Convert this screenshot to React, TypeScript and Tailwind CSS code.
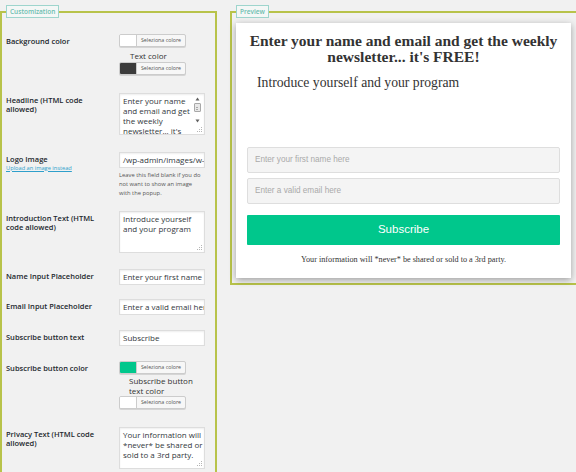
import React from "react";

const labelCls =
  "font-['Open_Sans',sans-serif] text-[7.5px] leading-[9.5px] font-semibold text-[#23282d]";
const fieldText = "font-['Open_Sans',sans-serif] text-[8px] leading-[10px] text-[#32373c]";

function ColorPicker({ swatch }: { swatch: string }) {
  return (
    <div className="flex h-[13px] w-[67px] overflow-hidden rounded-[2px] border border-[#cccccc] bg-[#f7f7f7] shadow-[0_1px_0_#d5d5d5]">
      <div className={`w-[17px] border-r border-[#cccccc] ${swatch}`} />
      <div className="flex flex-1 items-center justify-center font-['Open_Sans',sans-serif] text-[5.3px] text-[#555]">
        Seleziona colore
      </div>
    </div>
  );
}

function Grip() {
  return (
    <svg width="5" height="5" viewBox="0 0 5 5" className="absolute bottom-[2px] right-[2px]">
      <g fill="#b5b5b5">
        <rect x="4" y="0" width="1" height="1" />
        <rect x="2" y="2" width="1" height="1" />
        <rect x="4" y="2" width="1" height="1" />
        <rect x="0" y="4" width="1" height="1" />
        <rect x="2" y="4" width="1" height="1" />
        <rect x="4" y="4" width="1" height="1" />
      </g>
    </svg>
  );
}

function TextArea({ lines, scroll }: { lines: string[]; scroll?: boolean }) {
  return (
    <div className="relative h-[42px] w-[86px] overflow-hidden border border-[#dddddd] bg-white pl-[3px] pt-[2px] shadow-[inset_0_1px_2px_rgba(0,0,0,0.07)]">
      <div className={fieldText}>
        {lines.map((l) => (
          <div key={l} className="whitespace-nowrap">
            {l}
          </div>
        ))}
      </div>
      {scroll && (
        <div className="absolute right-[3px] top-[2px] flex h-[27px] w-[8px] flex-col items-center bg-white">
          <svg width="5" height="4" viewBox="0 0 5 4" className="mt-[1px]">
            <path d="M2.5 0.5 L4.5 3.5 L0.5 3.5 Z" fill="#606060" />
          </svg>
          <div className="mt-[2px] h-[9px] w-[7px] rounded-[1px] border border-[#a8a8a8] bg-[#e8e8e8] px-[1.5px] py-[2.5px]">
            <div className="h-[1px] bg-[#a8a8a8]" />
            <div className="mt-[1px] h-[1px] bg-[#a8a8a8]" />
          </div>
          <svg width="5" height="4" viewBox="0 0 5 4" className="mt-auto">
            <path d="M0.5 0.5 L4.5 0.5 L2.5 3.5 Z" fill="#606060" />
          </svg>
        </div>
      )}
      <Grip />
    </div>
  );
}

function TextInput({ value }: { value: string }) {
  return (
    <div
      className={`h-[16px] w-[86px] overflow-hidden whitespace-nowrap border border-[#dddddd] bg-white pl-[3px] pt-[2px] shadow-[inset_0_1px_2px_rgba(0,0,0,0.07)] ${fieldText}`}
    >
      {value}
    </div>
  );
}

function Row({
  label,
  mt,
  children,
}: {
  label: React.ReactNode;
  mt: string;
  children: React.ReactNode;
}) {
  return (
    <div className={`grid grid-cols-[113px_1fr] ${mt}`}>
      <div className={`${labelCls} mt-[2.5px]`}>{label}</div>
      <div>{children}</div>
    </div>
  );
}

function Legend({ text }: { text: string }) {
  return (
    <legend className="h-[13px] border border-[#9ed5cd] bg-[#f4f7f6] px-[3px] font-['Open_Sans',sans-serif] text-[6.5px] leading-[11px] font-semibold text-[#6cbdb0]">
      {text}
    </legend>
  );
}

export default function App() {
  return (
    <div className="flex h-[472px] w-[576px] overflow-hidden bg-[#f1f1f1] pt-[5px]">
      {/* settings form */}
      <fieldset className="h-[520px] w-[217px] shrink-0 border-2 border-[#b8c34a] pl-[4px]">
        <Legend text="Customization" />

        <Row label="Background color" mt="mt-[16px]">
          <ColorPicker swatch="bg-white" />
          <div className="ml-[11px] mt-[2px] h-[13px] font-['Open_Sans',sans-serif] text-[8px] leading-[13px] text-[#333]">
            Text color
          </div>
          <ColorPicker swatch="bg-[#3c3c3c]" />
        </Row>

        <Row
          label={
            <>
              Headline (HTML code
              <br />
              allowed)
            </>
          }
          mt="mt-[18px]"
        >
          <TextArea
            lines={["Enter your name", "and email and get", "the weekly", "newsletter... it's"]}
            scroll
          />
        </Row>

        <Row
          label={
            <>
              Logo Image
              <div className="mt-[0.5px] font-['Open_Sans',sans-serif] text-[5.7px] leading-[7px] font-normal text-[#2e9fcb] underline">
                Upload an image instead
              </div>
            </>
          }
          mt="mt-[17px]"
        >
          <TextInput value="/wp-admin/images/w-logo-blue.png" />
          <div className="mt-[3px] whitespace-nowrap font-['Open_Sans',sans-serif] text-[5.8px] leading-[9px] text-[#555]">
            Leave this field blank if you do
            <br />
            not want to show an image
            <br />
            with the popup.
          </div>
        </Row>

        <Row
          label={
            <>
              Introduction Text (HTML
              <br />
              code allowed)
            </>
          }
          mt="mt-[13px]"
        >
          <TextArea lines={["Introduce yourself", "and your program"]} />
        </Row>

        <Row label="Name Input Placeholder" mt="mt-[16px]">
          <TextInput value="Enter your first name here" />
        </Row>

        <Row label="Email Input Placeholder" mt="mt-[14px]">
          <TextInput value="Enter a valid email here" />
        </Row>

        <Row label="Subscribe button text" mt="mt-[15px]">
          <TextInput value="Subscribe" />
        </Row>

        <Row label="Subscribe button color" mt="mt-[15px]">
          <ColorPicker swatch="bg-[#00c78c]" />
          <div className="ml-[10px] mt-[2px] font-['Open_Sans',sans-serif] text-[8px] leading-[10px] text-[#333]">
            Subscribe button
            <br />
            text color
          </div>
          <ColorPicker swatch="bg-white" />
        </Row>

        <Row
          label={
            <>
              Privacy Text (HTML code
              <br />
              allowed)
            </>
          }
          mt="mt-[18px]"
        >
          <TextArea lines={["Your information will", "*never* be shared or", "sold to a 3rd party."]} />
        </Row>
      </fieldset>

      {/* live preview */}
      <fieldset className="ml-[13px] h-[280px] w-[360px] shrink-0 border-2 border-[#b8c34a] pl-[4px]">
        <Legend text="Preview" />
        <div className="mt-[5px] flex h-[255px] w-[335px] flex-col bg-white shadow-[0_2px_7px_rgba(0,0,0,0.35)]">
          <div className="mt-[10px] whitespace-nowrap text-center font-['Liberation_Serif',serif] text-[15.5px] leading-[16px] font-bold text-[#333]">
            Enter your name and email and get the weekly
            <br />
            newsletter... it's FREE!
          </div>
          <div className="ml-[21px] mt-[10px] font-['Liberation_Serif',serif] text-[13.7px] leading-[16px] text-[#333]">
            Introduce yourself and your program
          </div>
          <div className="mx-[11px] mt-[56px] flex flex-col gap-[5px]">
            <div className="flex h-[26px] items-center rounded-[2px] border border-[#dedede] bg-[#f4f4f4] pl-[7px] font-['Liberation_Sans',sans-serif] text-[8.2px] text-[#aaaaaa]">
              Enter your first name here
            </div>
            <div className="flex h-[26px] items-center rounded-[2px] border border-[#dedede] bg-[#f4f4f4] pl-[7px] font-['Liberation_Sans',sans-serif] text-[8.2px] text-[#aaaaaa]">
              Enter a valid email here
            </div>
            <div className="mt-[6px] flex h-[30px] items-center justify-center rounded-[1px] bg-[#00c78c] font-['Liberation_Sans',sans-serif] text-[11.5px] text-white">
              Subscribe
            </div>
          </div>
          <div className="mt-[10px] text-center font-['Liberation_Serif',serif] text-[8.2px] leading-[10px] text-[#333]">
            Your information will *never* be shared or sold to a 3rd party.
          </div>
        </div>
      </fieldset>
    </div>
  );
}
